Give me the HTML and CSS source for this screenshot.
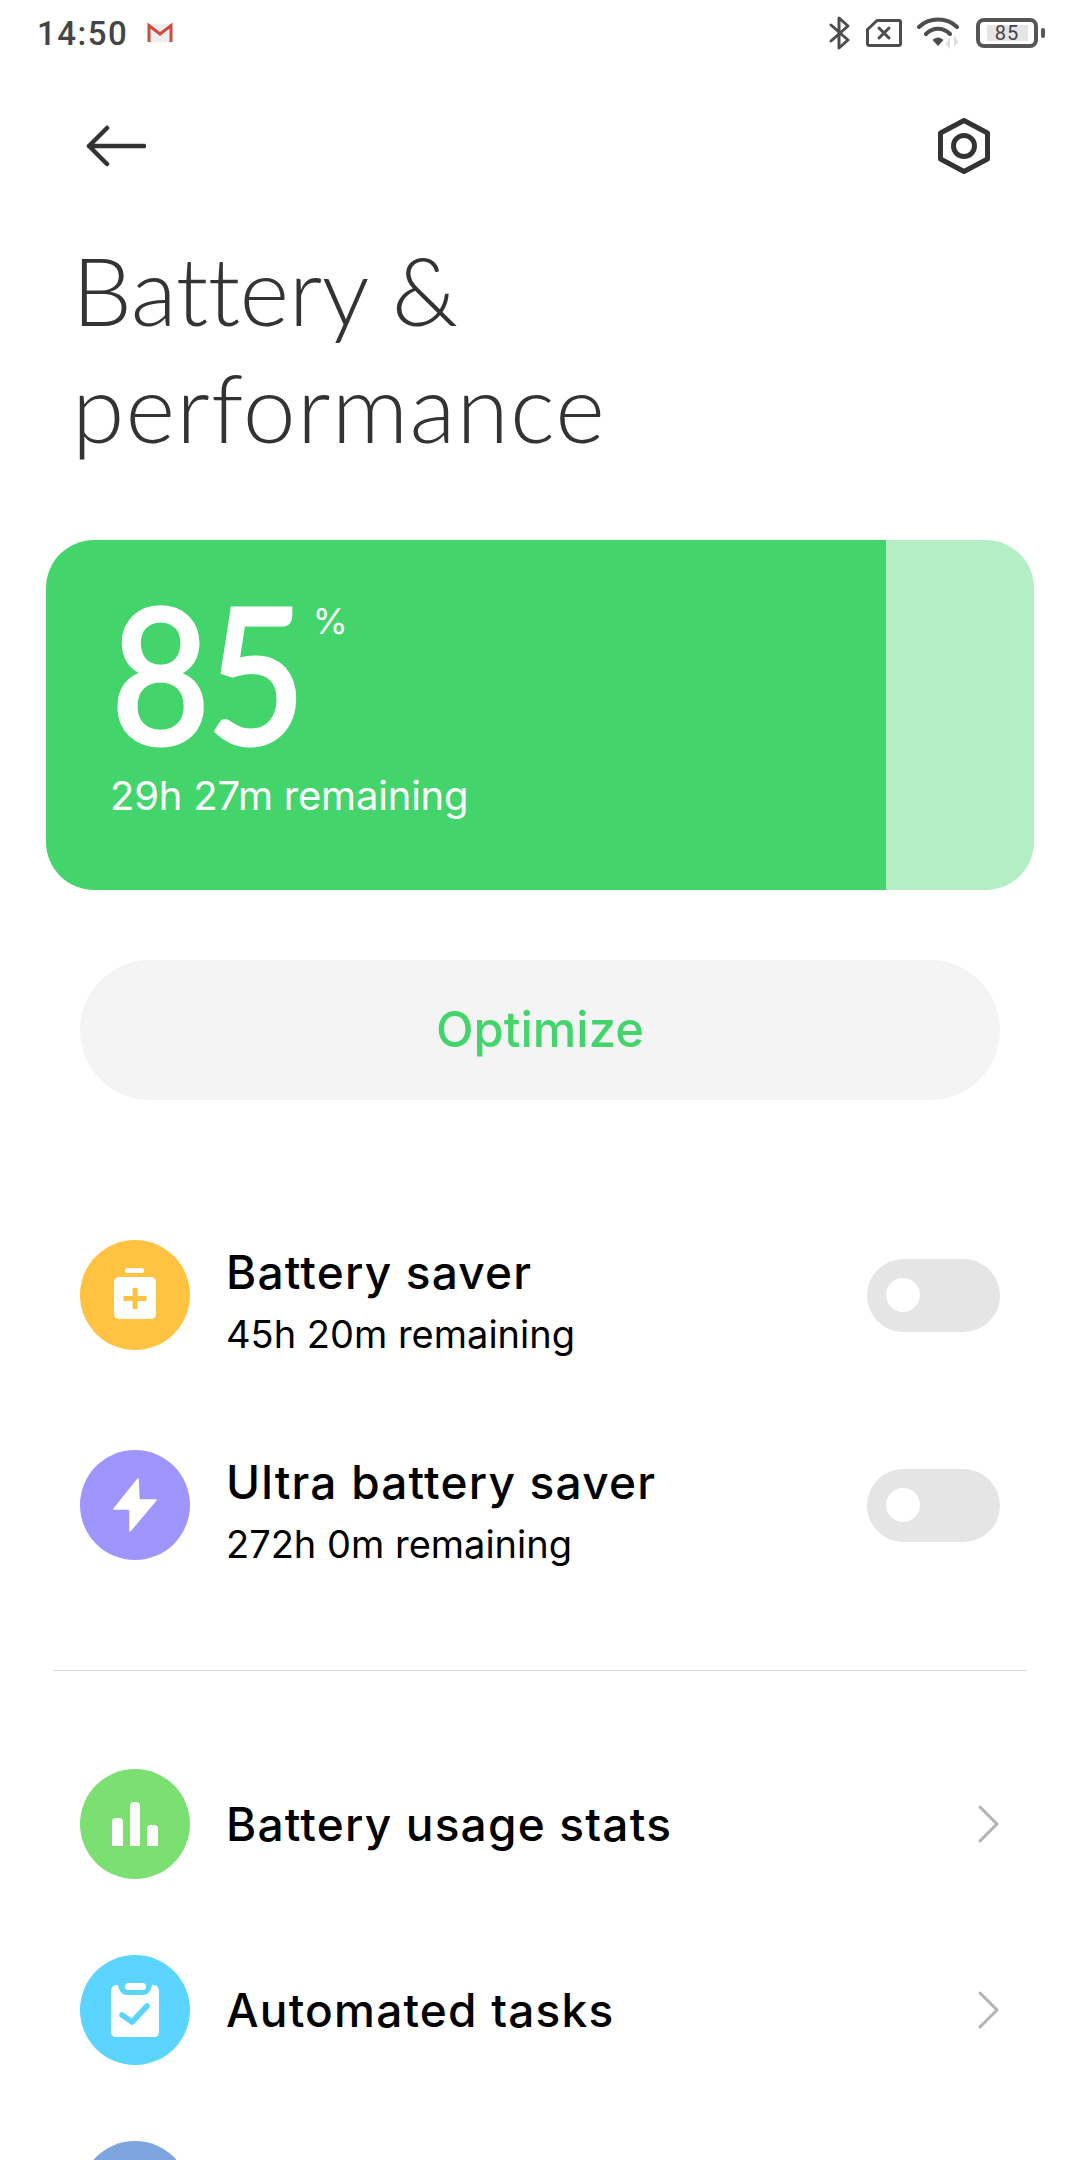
FILE: index.html
```html
<!DOCTYPE html>
<html lang="en">
<head>
  <meta charset="UTF-8">
  <meta name="viewport" content="width=device-width, initial-scale=1.0">
  <title>Battery &amp; performance</title>
  <link rel="stylesheet" href="styles.css">
</head>
<body>
  <div class="page">

    <!-- Status bar -->
    <div class="status">
      <span class="clock">14:50</span>
      <svg class="gmail" width="34" height="34" viewBox="0 0 34 34">
        <rect x="5" y="8" width="24" height="18" fill="#eeeeee"/>
        <path d="M6 26V9.500L17 18L28 9.500V26" fill="none" stroke="#cf4a3f" stroke-width="3"/>
      </svg>
      <div class="status-right">
        <svg width="22" height="34" viewBox="0 0 22 34"><path d="M2 9L19 24L10 32V2L19 10L2 25" fill="none" stroke="#4d4d4d" stroke-width="3" stroke-linejoin="round" stroke-linecap="round"/></svg>
        <svg width="36" height="28" viewBox="0 0 36 28"><path d="M11 1.500H33A1.500 1.500 0 0 1 34.500 3V25A1.500 1.500 0 0 1 33 26.500H3A1.500 1.500 0 0 1 1.500 25V10.500Z" fill="none" stroke="#4d4d4d" stroke-width="3" stroke-linejoin="round"/><path d="M13 9L23 19M23 9L13 19" stroke="#4d4d4d" stroke-width="3" stroke-linecap="round"/></svg>
        <svg width="44" height="32" viewBox="0 0 44 32"><path d="M2 10C12 0 30 0 40 10M9 17C16 10 26 10 33 17" fill="none" stroke="#4d4d4d" stroke-width="4" stroke-linecap="round"/><path d="M15.500 23C19 19.500 23 19.500 26.500 23L21 29Z" fill="#4d4d4d"/><path d="M33 20V32L29 27ZM37 18V30L41 25Z" fill="#dddddd"/></svg>
        <div class="battery">
          <div class="battery-body"><span class="battery-level">85</span></div>
          <div class="battery-nub"></div>
        </div>
      </div>
    </div>

    <!-- Top bar -->
    <div class="topbar">
      <svg width="60" height="42" viewBox="0 0 60 42"><path d="M58 21H3M21 3L3 21L21 39" fill="none" stroke="#333333" stroke-width="4.500" stroke-linecap="round" stroke-linejoin="round"/></svg>
      <svg width="52" height="56" viewBox="0 0 52 56"><path d="M26 2.500L49.500 15V41L26 53.500L2.500 41V15Z" fill="none" stroke="#333333" stroke-width="5" stroke-linejoin="round"/><circle cx="26" cy="28" r="10.500" fill="none" stroke="#333333" stroke-width="5"/></svg>
    </div>

    <h1 class="title"><span class="title-first">Battery &amp;</span><br>performance</h1>

    <!-- Battery card -->
    <div class="card">
      <div class="card-fill">
        <div class="level"><span class="level-num">85</span><span class="level-pct">%</span></div>
        <div class="level-time">29h 27m remaining</div>
      </div>
      <div class="card-rest"></div>
    </div>

    <div class="optimize">Optimize</div>

    <!-- Saver modes -->
    <div class="saver-list">
      <div class="row">
        <div class="circle c-yellow">
          <svg width="46" height="54" viewBox="0 0 46 54"><rect x="13" y="0" width="19" height="5" rx="2.500" fill="#fff"/><rect x="2" y="9" width="42" height="42" rx="5" fill="#fff"/><path d="M23 20V41M11.500 30.500H34.500" stroke="#ffc341" stroke-width="5"/></svg>
        </div>
        <div class="row-text">
          <div class="row-title">Battery saver</div>
          <div class="row-sub">45h 20m remaining</div>
        </div>
        <div class="toggle"><div class="knob"></div></div>
      </div>
      <div class="row">
        <div class="circle c-purple">
          <svg width="44" height="54" viewBox="0 0 44 54"><path d="M25 1L1 31H17V53L43 22H26Z" fill="#fff" stroke="#fff" stroke-width="1.500" stroke-linejoin="round"/></svg>
        </div>
        <div class="row-text">
          <div class="row-title">Ultra battery saver</div>
          <div class="row-sub">272h 0m remaining</div>
        </div>
        <div class="toggle"><div class="knob"></div></div>
      </div>
    </div>

    <div class="divider"></div>

    <!-- Other links -->
    <div class="link-list">
      <div class="row row-link">
        <div class="circle c-green">
          <svg width="46" height="44" viewBox="0 0 46 44"><path d="M0 44V20A4 4 0 0 1 4 16H7A4 4 0 0 1 11 20V44ZM18 44V4A4 4 0 0 1 22 0H24A4 4 0 0 1 28 4V44ZM35 44V27A4 4 0 0 1 39 23H42A4 4 0 0 1 46 27V44Z" fill="#fff"/></svg>
        </div>
        <div class="row-text"><div class="row-title">Battery usage stats</div></div>
        <svg class="chevron" width="22" height="38" viewBox="0 0 22 38"><path d="M2 2L19 19L2 36" fill="none" stroke="#b3b3b3" stroke-width="3" stroke-linecap="round" stroke-linejoin="round"/></svg>
      </div>
      <div class="row row-link">
        <div class="circle c-blue">
          <svg width="48" height="54" viewBox="0 0 48 54"><path d="M6 2H7C8 8 11 12 16 12H32C37 12 40 8 41 2H42C46 2 48 5 48 8V49C48 52 46 54 43 54H5C2 54 0 52 0 49V8C0 5 2 2 6 2Z" fill="#fff"/><rect x="14" y="0" width="21" height="7" rx="3.500" fill="#fff"/><path d="M11 32L21 39L36 23" fill="none" stroke="#5bd4ff" stroke-width="5.500" stroke-linecap="round" stroke-linejoin="round"/></svg>
        </div>
        <div class="row-text"><div class="row-title">Automated tasks</div></div>
        <svg class="chevron" width="22" height="38" viewBox="0 0 22 38"><path d="M2 2L19 19L2 36" fill="none" stroke="#b3b3b3" stroke-width="3" stroke-linecap="round" stroke-linejoin="round"/></svg>
      </div>
      <div class="row row-link">
        <div class="circle c-slate"></div>
      </div>
    </div>

  </div>
</body>
</html>
```

FILE: styles.css
```css
/* Basic Styling */
body {
  margin: 0;
  background-color: #ffffff;
  font-family: 'Inter', 'Noto Sans', sans-serif;
  overflow: hidden;
}

.page {
  height: 2160px;
  overflow: hidden;
}

/* Status bar */
.status {
  display: flex;
  align-items: center;
  height: 66px;
  padding: 0 35px 0 37px;
}

.clock {
  font-family: 'Roboto', sans-serif;
  font-size: 33px;
  font-weight: 500;
  letter-spacing: 1.5px;
  color: #444444;
}

.gmail {
  margin-left: 15px;
}

.status-right {
  display: flex;
  align-items: center;
  gap: 15px;
  margin-left: auto;
}

.battery {
  display: flex;
  align-items: center;
  gap: 3px;
}

.battery-body {
  display: flex;
  align-items: center;
  justify-content: center;
  box-sizing: border-box;
  width: 62px;
  height: 30px;
  border: 4px solid #555555;
  border-radius: 8px;
}

.battery-level {
  width: 41px;
  height: 16px;
  background-color: #e5e5e5;
  font-family: 'Roboto', sans-serif;
  font-size: 20px;
  line-height: 16px;
  letter-spacing: 1px;
  text-align: center;
  color: #444444;
}

.battery-nub {
  width: 4px;
  height: 10px;
  border-radius: 2px;
  background-color: #555555;
}

/* Top bar */
.topbar {
  display: flex;
  align-items: center;
  justify-content: space-between;
  padding: 52px 90px 0 86px;
}

/* Title */
.title {
  margin: 57px 0 0 72px;
  font-family: 'Lato', sans-serif;
  font-size: 95px;
  font-weight: 300;
  line-height: 117px;
  letter-spacing: 1.2px;
  color: #333333;
}

.title-first {
  letter-spacing: -0.5px;
}

/* Battery card */
.card {
  display: flex;
  height: 350px;
  margin: 75px 46px 0;
  border-radius: 48px;
  overflow: hidden;
}

.card-fill {
  box-sizing: border-box;
  width: 840px;
  padding: 42px 0 0 65px;
  background-color: #43d56c;
  color: #ffffff;
}

.card-rest {
  flex: 1;
  background-color: #b4eec4;
}

.level {
  display: flex;
  align-items: flex-start;
}

/* Lato digits are wider than the reference, so squeeze them a bit */
.level-num {
  font-family: 'Lato', sans-serif;
  font-size: 190px;
  font-weight: 500;
  line-height: 176px;
  letter-spacing: -4px;
  -webkit-text-stroke: 3px #ffffff;
  transform: scaleX(0.9);
  transform-origin: left;
}

.level-pct {
  margin: 19px 0 0 -11px;
  font-size: 36px;
  font-weight: 400;
  line-height: 40px;
}

.level-time {
  margin-top: 15px;
  margin-left: -1px;
  font-size: 40px;
  line-height: 46px;
  font-weight: 400;
  letter-spacing: -0.2px;
}

/* Optimize button */
.optimize {
  height: 140px;
  margin: 70px 80px 0;
  border-radius: 70px;
  background-color: #f4f4f4;
  font-size: 49px;
  font-weight: 500;
  line-height: 140px;
  text-align: center;
  color: #43d56c;
}

/* Rows */
.saver-list {
  display: flex;
  flex-direction: column;
  gap: 86px;
  margin-top: 133px;
}

.link-list {
  display: flex;
  flex-direction: column;
  gap: 76px;
  margin-top: 98px;
}

.row {
  display: flex;
  align-items: center;
  padding: 0 80px;
}

.circle {
  display: flex;
  align-items: center;
  justify-content: center;
  flex: none;
  width: 110px;
  height: 110px;
  border-radius: 50%;
}

.c-yellow { background-color: #ffc341; }
.c-purple { background-color: #9f95ff; }
.c-green { background-color: #7be071; }
.c-blue { background-color: #5bd4ff; }
.c-slate { background-color: #7fa5de; }

.row-text {
  flex: 1;
  margin-left: 36px;
}

.row-title {
  font-size: 46px;
  font-weight: 500;
  line-height: 78px;
  letter-spacing: 1.2px;
  color: #000000;
}

.row-sub {
  font-size: 38px;
  line-height: 46px;
  color: #000000;
}

.toggle {
  display: flex;
  align-items: center;
  box-sizing: border-box;
  width: 133px;
  height: 73px;
  padding-left: 19px;
  border-radius: 37px;
  background-color: #e5e5e5;
}

.knob {
  width: 34px;
  height: 34px;
  border-radius: 50%;
  background-color: #ffffff;
}

.divider {
  height: 1px;
  margin: 103px 54px 0;
  background-color: #d9d9d9;
}
```
